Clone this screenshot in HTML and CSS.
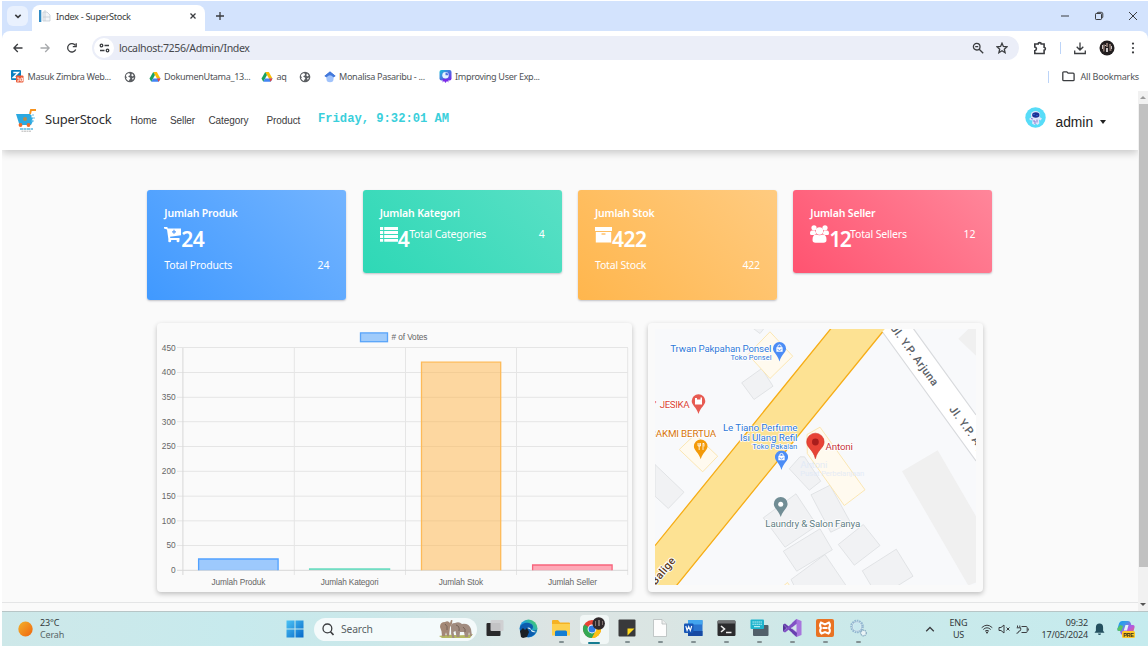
FILE: index.html
```html
<!DOCTYPE html>
<html lang="id">
<head>
<meta charset="utf-8">
<title>Index - SuperStock</title>
<link rel="stylesheet" href="styles.css">
</head>
<body>
<svg class="defs" aria-hidden="true">
  <defs>
    <linearGradient id="copilot" x1="0" y1="0" x2="1" y2="1"><stop offset="0" stop-color="#0f9bf0"/><stop offset=".3" stop-color="#3b9be8"/><stop offset=".6" stop-color="#b458e6"/><stop offset="1" stop-color="#f06a50"/></linearGradient>
    <linearGradient id="edge" x1="0" y1="1" x2="1" y2="0"><stop offset="0" stop-color="#0b62b8"/><stop offset=".5" stop-color="#1b9de2"/><stop offset="1" stop-color="#54d94c"/></linearGradient>
    <linearGradient id="sun" x1="0" y1="0" x2="1" y2="1"><stop offset="0" stop-color="#f3b32c"/><stop offset="1" stop-color="#f0640e"/></linearGradient>
    <linearGradient id="win" x1="0" y1="0" x2="1" y2="1"><stop offset="0" stop-color="#4cc3f5"/><stop offset="1" stop-color="#0668c9"/></linearGradient>
    <linearGradient id="exp" x1="0" y1="0" x2="1" y2="1"><stop offset="0" stop-color="#19c5d8"/><stop offset="1" stop-color="#7a22ea"/></linearGradient>
  </defs>
  <symbol id="globe" viewBox="0 0 12 12"><circle cx="6" cy="6" r="5.300" fill="#5b5e62"/><path d="M1.800 4.800C2.500 3 4 2 5.500 2 5 3 6.500 3.200 6 4.300 5.500 5 4.500 4.500 4.300 5.500 4.500 6.500 6.500 6 6.300 7.500 6 8.500 5 8.500 5 10 3.500 9.500 2 8 1.800 6.500L3.300 7.200ZM8 2.500 9.800 4.500 8.200 5.500 7.300 4.200ZM8 7.200 10.200 6.600 8.800 9Z" fill="#fff"/></symbol>
  <symbol id="drive" viewBox="0 0 12 12"><path d="M4.200 1h3.600l3.700 6.500H8Z" fill="#fbbc04"/><path d="M4.200 1 6 4.100 2.300 10.800.500 7.500Z" fill="#1aa15f"/><path d="M4 7.500h7.500l-1.800 3.300H2.300Z" fill="#4285f4"/><path d="m8 7.500h3.500l-1.800 3.300Z" fill="#ea4335"/></symbol>
  <symbol id="shop" viewBox="0 0 14 21"><path d="M7 0a6.700 6.700 0 0 1 6.700 6.700C13.700 11 9 12.500 7 20 5 12.500.300 11 .300 6.700A6.700 6.700 0 0 1 7 0Z" fill="#4c8df6"/><path d="M3.800 5.500h6.400v4.500H3.800Z" fill="#fff"/><path d="M5.300 6V4.700a1.700 1.700 0 0 1 3.400 0V6" fill="none" stroke="#fff"/><path d="M5.300 7a1.700 1.700 0 0 0 3.400 0" fill="none" stroke="#4c8df6" stroke-width=".8"/></symbol>
</svg>

<div class="screen">
  <header class="tabstrip">
    <span class="tab-search"><svg width="10" height="10" viewBox="0 0 10 10"><path d="M2.300 3.800 5 6.300l2.700-2.500" class="ln bold"/></svg></span>
    <div class="tab">
      <svg width="12" height="12" viewBox="0 0 12 12"><path d="M0 0h2.300v12H0Z" fill="#318bc4"/><path d="M4 2h4l3 3v6H4ZM6 0v11M4 7h7" fill="#f2f5f8" stroke="#c3ccd4" stroke-width=".8"/></svg>
      <span class="tab-title">Index - SuperStock</span>
      <svg class="tab-close" width="8" height="8" viewBox="0 0 8 8"><path d="M1.500 1.500l5 5m0-5-5 5" class="ln"/></svg>
    </div>
    <svg class="plus" width="10" height="10" viewBox="0 0 10 10"><path d="M5 1v8M1 5h8" class="ln"/></svg>
    <div class="win-buttons">
      <svg width="10" height="10" viewBox="0 0 10 10"><path d="M1 5h8" class="ln thin"/></svg>
      <svg width="10" height="10" viewBox="0 0 10 10"><path d="M1.500 3.200q0-.7.700-.7h4.600q.700 0 .700.700v4.600q0 .700-.7.700H2.200q-.7 0-.7-.7ZM3 2.300q.200-1 1-1h3.300q1.500 0 1.500 1.500V6q0 .800-.8 1" class="ln thin"/></svg>
      <svg width="10" height="10" viewBox="0 0 10 10"><path d="m1 1 8 8m0-8-8 8" class="ln thin"/></svg>
    </div>
  </header>

  <div class="toolbar">
    <div class="nav-icons">
      <svg width="12" height="12" viewBox="0 0 12 12"><path d="M10.500 6H2M5.800 2 1.900 6l3.900 4" class="ln"/></svg>
      <svg width="12" height="12" viewBox="0 0 12 12"><path d="M1.500 6H10M6.200 2l3.900 4-3.900 4" class="ln pale"/></svg>
      <svg width="12" height="12" viewBox="0 0 12 12"><path d="M9.700 7.500A4.200 4.200 0 1 1 9.300 3.400M10.200 1.300v3.400H6.800" class="ln"/></svg>
    </div>
    <div class="omnibox">
      <span class="site-info"><svg width="11" height="10" viewBox="0 0 11 10"><circle cx="2.500" cy="2.500" r="1.300" class="ln"/><path d="M5.500 2.500h4.500M1 7.500h4.500" class="ln"/><circle cx="8.500" cy="7.500" r="1.300" class="ln"/></svg></span>
      <span class="url">localhost:7256/Admin/Index</span>
      <svg class="lens" width="12" height="12" viewBox="0 0 12 12"><circle cx="4.700" cy="4.700" r="3.300" class="ln"/><path d="m7.200 7.200 4 4M3.200 4.700h3" class="ln"/></svg>
      <svg width="12" height="12" viewBox="0 0 12 12"><path d="m6 1.200 1.400 3.300 3.600.300-2.700 2.400.800 3.500L6 8.800l-3.100 1.900.800-3.500L1 4.800l3.600-.3Z" class="ln"/></svg>
    </div>
    <div class="tools">
      <svg width="14" height="14" viewBox="0 0 14 14"><path d="M1.800 3h3.400q0-1.400 1.500-1.400T8.200 3h2.900v3.300q1.300.200 1.300 1.500t-1.300 1.500v3.200H1.800V9.700q1.600-.3 1.600-1.900T1.800 6Z" class="ln bold"/></svg>
      <i class="sep"></i>
      <svg class="dl" width="14" height="14" viewBox="0 0 14 14"><path d="M7 1.500v7.300M3.700 5.700 7 9l3.300-3.300M1.700 9.500v3h10.600v-3" class="ln"/></svg>
      <svg class="me" width="16" height="16" viewBox="0 0 16 16"><circle cx="8" cy="8" r="7.500" fill="#211d1e"/><path d="M4 4.500h2l-.5 7H4ZM7 3h2v4H7ZM10 4h2l.500 7h-2Z" fill="#84716a"/><path d="M3 5h1v4H3ZM7 8h2v4H7ZM12 6h1v3h-1ZM6 5h1v1H6Z" fill="#c9c4c5"/></svg>
      <svg width="4" height="14" viewBox="0 0 4 14"><g fill="#3b3d40"><circle cx="2" cy="2.600" r="1.100"/><circle cx="2" cy="7" r="1.100"/><circle cx="2" cy="11.400" r="1.100"/></g></svg>
    </div>
  </div>

  <div class="bookmarks">
    <span class="bm"><svg width="13" height="13" viewBox="0 0 13 13"><rect width="10" height="10" rx="1" fill="#087fc0"/><path d="M2.300 2.500h5l-5 5h5" fill="none" stroke="#fff" stroke-width="1.500"/><rect x="5" y="5.500" width="7.500" height="7" rx="1" fill="#ec5b38"/><path d="M6 8h2v3H6M10 8h1.500v3H9.500Z" stroke="#fff" fill="none" stroke-width=".8"/></svg><span class="w84">Masuk Zimbra Web...</span></span>
    <span class="bm"><svg width="12" height="12"><use href="#globe"/></svg></span>
    <span class="bm"><svg width="12" height="12"><use href="#drive"/></svg><span class="w85">DokumenUtama_13...</span></span>
    <span class="bm"><svg width="12" height="12"><use href="#drive"/></svg><span class="w10">aq</span></span>
    <span class="bm"><svg width="12" height="12"><use href="#globe"/></svg></span>
    <span class="bm"><svg width="12" height="12" viewBox="0 0 12 12"><path d="M6 .500 11.500 5 6 7 .500 5Z" fill="#356ac3"/><circle cx="6" cy="7.700" r="3.600" fill="#a1c3fb"/><path d="M.500 5 6 .500 11.500 5 9.300 6.500a3.600 3.600 0 0 0-6.600 0Z" fill="#4379dd"/></svg><span class="w87">Monalisa Pasaribu - ...</span></span>
    <span class="bm"><svg width="13" height="13" viewBox="0 0 13 13"><rect x=".5" width="12" height="10.500" rx="2" fill="url(#exp)"/><path d="m4 9-.5 3.500L5 11l1.500 2L8 11l1.500 1.500L9 9Z" fill="#7a2ae8"/><circle cx="6.500" cy="5.200" r="3.200" fill="#e6f4ff"/><path d="M6.500 5.200V2.500a2.700 2.700 0 0 1 2.700 2.700Z" fill="#5372de"/></svg><span class="w85">Improving User Exp...</span></span>
    <span class="all-bm"><i class="sep"></i><svg width="13" height="11" viewBox="0 0 13 11"><path d="M.800 2q0-1.200 1-1.200h3l1.300 1.400h5q1 0 1 1v5.500q0 1-1 1H1.800q-1 0-1-1Z" class="ln"/></svg><span>All Bookmarks</span></span>
  </div>

  <div class="viewport">
    <div class="page">
      <nav class="navbar">
        <svg class="brand-logo" width="21" height="24" viewBox="0 0 21 24"><path d="M0 5h14l2 2-1 1 2 1-1 2 1 1-2 4H3.500Z" fill="#2ba9e1"/><path d="M14 5 15 1h5" fill="none" stroke="#f7931e" stroke-width="1.900"/><path d="M16 6h2M16 9h3M15 12h3" stroke="#62bfe9"/><circle cx="9" cy="10" r="2" fill="#b88c4c"/><circle cx="4.500" cy="16" r="1.900" fill="#f06a2a"/><circle cx="12.500" cy="16" r="1.900" fill="#f06a2a"/><path d="M4 20h13" stroke="#5abbe4" stroke-width="1.500" stroke-dasharray="3 .5"/><path d="M5.500 22.200h10" stroke="#a5a5a5" stroke-width=".8" stroke-dasharray="2 .5"/></svg>
        <span class="brand">SuperStock</span>
        <span class="link home">Home</span>
        <span class="link seller">Seller</span>
        <span class="link category">Category</span>
        <span class="link product">Product</span>
        <span class="clock">Friday, 9:32:01 AM</span>
        <div class="user">
          <svg width="21" height="21" viewBox="0 0 21 21"><circle cx="10.500" cy="10.500" r="10.200" fill="#57dcf8"/><path d="M4 12 6.500 10h8l2.500 1.500-1.500 2-1.500-1 .300 4-2 1.500-1.300-1.500-1.500 1.500-2.500-1.500.5-3.500-1.500.5Z" fill="#dfe5fb"/><ellipse cx="10.500" cy="8" rx="4.700" ry="3.900" fill="#e4e5fb"/><ellipse cx="10.800" cy="8" rx="3.700" ry="2.700" fill="#1b3096"/><path d="M8 14h2v3M12 12.500v3M6 11.500l2 .5" stroke="#8a78cf" fill="none"/><path d="M8.500 7.500h1M11.500 8.500h1" stroke="#3887e7"/></svg>
          <span class="user-name">admin</span>
          <i class="caret"></i>
        </div>
      </nav>

      <section class="cards">
        <article class="card blue tall">
          <h3>Jumlah Produk</h3>
          <div class="metric"><svg width="17" height="17" viewBox="0 0 17 17"><path d="M0 0h3.300l.5 1.500H17v6.700l-11 1.600.3 1.100H15.500V13H4.500L3 2.500 0 1.500Z" fill="#fff"/><circle cx="5.700" cy="13.800" r="1.500" fill="#fff"/><circle cx="14" cy="13.800" r="1.500" fill="#fff"/><path d="M10 2.800v4M8 4.800h4" stroke="#5a9ff9" stroke-width="1.200"/></svg><b>24</b></div>
          <p><span>Total Products</span><span>24</span></p>
        </article>
        <article class="card green">
          <h3>Jumlah Kategori</h3>
          <div class="metric inline"><svg width="18" height="15" viewBox="0 0 18 15"><path d="M0 0h3.200v3H0ZM4.200 0H18v3H4.200ZM0 4h3.200v3H0ZM4.200 4H18v3H4.200ZM0 8h3.200v3H0ZM4.200 8H18v3H4.200ZM0 12h3.200v2.800H0ZM4.200 12H18v2.800H4.200Z" fill="#fff"/></svg><b>4</b><p><span>Total Categories</span><span>4</span></p></div>
        </article>
        <article class="card orange tall">
          <h3>Jumlah Stok</h3>
          <div class="metric"><svg width="17" height="16" viewBox="0 0 17 16"><path d="M0 0h17v4H0ZM.800 5h15.400v10.500H.800Z" fill="#fff"/><path d="M7 7h3" stroke="#ffc16c" stroke-width="1.400" stroke-linecap="round"/></svg><b class="pad">422</b></div>
          <p><span>Total Stock</span><span>422</span></p>
        </article>
        <article class="card red">
          <h3>Jumlah Seller</h3>
          <div class="metric inline"><svg class="people" width="19" height="18" viewBox="0 0 19 18"><g fill="#fff"><circle cx="4" cy="2.800" r="2.600"/><circle cx="15" cy="2.800" r="2.600"/><path d="M0 8.500Q0 5.500 2 5.500h3l1.300 3-2 1.500H1.500Q0 10 0 8.500ZM19 8.500q0-3-2-3h-3l-1.300 3 2 1.500h2.800Q19 10 19 8.500Z"/><circle cx="9.500" cy="6" r="3.700"/><path d="M2.500 15q0-5.500 3.500-5.500 3.500 1.500 7 0 3.500 0 3.500 5.500 0 2.800-3 2.800H5.500q-3 0-3-2.800Z"/></g></svg><b class="tight">12</b><p><span>Total Sellers</span><span>12</span></p></div>
        </article>
      </section>

      <section class="panels">
        <div class="panel chart">
          <svg width="475" height="269" viewBox="157 323 475 269">
            <rect x="360.500" y="332.900" width="27" height="8.800" fill="#9fcbfb" stroke="#59a4f9" stroke-width="1.300"/>
            <text x="391.500" y="339.700" textLength="36" class="ct">#&#160;of Votes</text>
            <g class="grid">
              <path d="M177 347.500H628M177 372.500H628M177 397.300H628M177 421.700H628M177 446.500H628M177 471.300H628M177 496.200H628M177 520.800H628M177 545.500H628M294.300 348V575M405.500 348V575M516.500 348V575M627.700 348V575"/>
              <path d="M177 570.300H628M182.900 348V575" class="axis"/>
            </g>
            <g class="ct" text-anchor="end">
              <text x="175.700" y="350.600">450</text><text x="175.700" y="375.400">400</text><text x="175.700" y="400">350</text><text x="175.700" y="424.600">300</text><text x="175.700" y="449.400">250</text><text x="175.700" y="474.100">200</text><text x="175.700" y="498.800">150</text><text x="175.700" y="523.500">100</text><text x="175.700" y="548.200">50</text><text x="175.700" y="573.200">0</text>
            </g>
            <g stroke-width="1.300">
              <path d="M198.600 570.300V559h79.500v11.300" fill="#51a1ff" fill-opacity=".55" stroke="#51a1ff"/>
              <path d="M309.600 570V569h80v1" fill="#8ce3cd" stroke="#69dcc0"/>
              <path d="M421.500 570.300V362.200h79.200v208.100" fill="#ffb74d" fill-opacity=".52" stroke="#fdba59"/>
              <path d="M532.600 570.300V565h79.500v5.300" fill="#ff8da0" fill-opacity=".75" stroke="#f7647c"/>
            </g>
            <g class="ct">
              <text x="211.500" y="584.600" textLength="54">Jumlah Produk</text><text x="320.700" y="584.600" textLength="58">Jumlah Kategori</text><text x="438.700" y="584.600" textLength="44.500">Jumlah Stok</text><text x="548" y="584.600" textLength="49">Jumlah Seller</text>
            </g>
          </svg>
        </div>
        <div class="panel map">
          <svg width="321" height="256" viewBox="655 329.500 321 256">
            <rect x="655" y="329" width="321" height="257" fill="#f8f9fb"/>
            <path d="m902 471.700 35.700-21L976 516.700V583l-7.700 3Z M958.300 339.300 969 329h7v27.300Z" fill="#f0f0f0"/>
            <g fill="#f1f2f4" stroke="#dcdee1" stroke-width=".8">
              <path d="m753.300 329 6.700 5 4-5ZM741.700 383.300l20-14.300L773 386.700 754 400ZM655 465l29 27.700-15.700 16.300L655 496.700ZM789.300 469.300l10.700-12 4.500 0 16.200 24.400-11.400 9ZM763.300 518.300l32.700-24L817 526l-32 21.700ZM811 495.300l19-9.600 20.700 37.600-20 9.400ZM783.300 551.700l36.700-22.400 12.300 21-35.600 21.400ZM791 580l34-25 21 31h-52ZM838.300 545l25-20 16.700 21-25.700 19.700ZM862.300 571.300l34-21.600L913 576.700 898 586h-27Z"/>
            </g>
            <g fill="#fffaef" stroke="#fbe4ac" stroke-width=".9">
              <path d="m770 332.300 22.700 24.400L770 379l-22-24ZM679.300 450 695 435l22.700 21.700-15 15.600ZM807 435l13-7.300 45 62.600-20.700 15.700-37-52ZM784 586l3.500-3 2 3Z"/>
            </g>
            <path d="M882 329h31.500L976 415v46.500L882.500 333Z" fill="#fff"/>
            <path d="m913.300 329 62.700 86.500M882.500 332.500 976 461.500" stroke="#d8dadd" stroke-width="1.200"/>
            <path d="M830.700 329h54.500L677 586h-22V546Z" fill="#fde293"/>
            <path d="M831 329 655 546.200M882.500 332.500 676.500 586" stroke="#f6ad17" stroke-width="1.300"/>
            <g class="road">
              <text transform="translate(890.300 329) rotate(53.700)" textLength="72">Jl. Y.P. Arjuna</text>
              <text transform="translate(948.800 409.800) rotate(53.700)" textLength="72">Jl. Y.P. Arjuna</text>
              <text transform="translate(655.500 586) rotate(-50)" class="balige" textLength="32">Balige</text>
            </g>
            <g class="lbl">
              <g fill="#2e78d8"><text x="670.300" y="352.800" textLength="101">Trwan Pakpahan Ponsel</text><text x="730.500" y="360" textLength="41" class="sub">Toko Ponsel</text>
              <text x="723" y="431.800" textLength="74.500">Le Tiano Perfume</text><text x="740" y="441.500" textLength="57.500">Isi Ulang Refil</text><text x="752.300" y="449" textLength="45" class="sub">Toko Pakaian</text></g>
              <g fill="#db4537"><text x="654.700" y="408.800">'</text><text x="659.700" y="408.800" textLength="30">JESIKA</text></g>
              <text x="649.700" y="437.300" textLength="66.500" fill="#d6750b">BAKMI BERTUA</text>
              <text x="765.300" y="527.600" textLength="95" fill="#607d83">Laundry &amp; Salon Fanya</text>
              <text x="825.500" y="450" textLength="27.500" fill="#c5323a">Antoni</text>
              <g fill="#dfe9f8" class="ghost"><text x="800.300" y="468.300" textLength="27">Antoni</text><text x="800.300" y="476.300" textLength="64" class="sub">Pusat Perbelanjaan</text></g>
            </g>
            <use href="#shop" x="772.500" y="342.500" width="14" height="20.500"/>
            <use href="#shop" x="774.500" y="451" width="14" height="20.500"/>
            <path d="M698.500 394.700a6.800 6.800 0 0 1 6.800 6.800c0 4-4.500 6-6.800 13-2.300-7-6.800-9-6.800-13a6.800 6.800 0 0 1 6.800-6.800Z" fill="#e75b52"/><path d="M695 398.500h2v1.500h3.500v-2h1.500v7h-7Z" fill="#fff"/>
            <path d="M700.700 440a6.800 6.800 0 0 1 6.800 6.800c0 4-4.500 6-6.800 13-2.300-7-6.800-9-6.800-13a6.800 6.800 0 0 1 6.800-6.800Z" fill="#f39a09"/><path d="M698 443.500v3h2.500v-3M699.200 443.500v7M703 443.500v7M703 444h1v3" stroke="#fff" fill="none" stroke-width=".8"/>
            <path d="M780.700 497.600a6.900 6.900 0 0 1 6.900 6.900c0 4-4.500 6-6.900 13-2.300-7-6.900-9-6.900-13a6.900 6.900 0 0 1 6.900-6.900Z" fill="#718d95"/><circle cx="780.700" cy="504.700" r="2.500" fill="#fff"/>
            <path d="M815.400 433.700a8.700 8.700 0 0 1 8.700 8.700c0 6-6.700 7.800-8.700 16.800-2-9-8.700-10.800-8.700-16.800a8.700 8.700 0 0 1 8.700-8.700Z" fill="#e84336" stroke="#cf3429" stroke-width=".6"/><circle cx="815.400" cy="442.500" r="3.400" fill="#a91d1c"/>
          </svg>
        </div>
      </section>
      <footer class="rule"></footer>
    </div>
    <div class="scrollbar"><i class="up"></i><i class="thumb"></i><i class="down"></i></div>
  </div>

  <div class="taskbar">
    <svg class="sun" width="15" height="16" viewBox="0 0 15 16"><ellipse cx="7.500" cy="8" rx="7.200" ry="7.600" fill="url(#sun)"/></svg>
    <div class="weather"><span>23°C</span><span>Cerah</span></div>
    <svg class="start" width="18" height="18" viewBox="0 0 18 18"><path d="M.500.500h8v8h-8ZM9.500.500h8v8h-8ZM.500 9.500h8v8h-8ZM9.500 9.500h8v8h-8Z" fill="url(#win)"/></svg>
    <div class="search"><svg width="12" height="13" viewBox="0 0 12 13"><circle cx="5.400" cy="5.400" r="4.400" class="ln"/><path d="m8.500 8.700 3 3.300" class="ln bold"/></svg><span>Search</span>
      <svg class="elephants" width="34" height="20" viewBox="0 0 34 20"><path d="M0 17q8-2 16-1t18-1l-3 4H3Z" fill="#b5b862"/><path d="M1 8q0-5 5-5 3-2 5 1l1-3 1.500.3q0 4-2.500 7l-1 9H8l-1-4-1 4H3l-.5-5Z" fill="#a38876"/><path d="M12 9q-1-5 4-5 4-2 7 1 7-1 9 5l1 7h-2l-1-4-1 5h-3l-1-5-4 0-.5 5h-3l-1-6-2 1 1 6h-2q-2-4-1.500-10Z" fill="#a18c80"/><path d="M6 5q3 2 2 6M17 6q4 1 3 6M24 8q3 2 2 5" stroke="#756358" fill="none"/></svg>
    </div>
    <div class="apps">
      <span><svg width="18" height="18" viewBox="0 0 18 18"><rect x=".5" y="4" width="14" height="13" rx="1" fill="#29292b"/><rect x="4.500" y="1" width="13" height="11" rx="1" fill="#cfcfd1" opacity=".93"/></svg></span>
      <span><svg width="19" height="19" viewBox="0 0 19 19"><circle cx="9.500" cy="9.500" r="9" fill="url(#edge)"/><path d="M1 8q3-5 9-4 4 1 4 4 0 2-2 2.500 3 2 6 0Q16 18 9 18 1 17 1 8Z" fill="#0c5cae"/><path d="M8 9q2-1 3 0 2 1.500 1 3 2 2 5 1" fill="#d9f4f5"/><path d="m1 12 3-3 2 2 2-2 2 4-2 5-4 1-2-1Z" fill="#1b2025"/></svg></span>
      <span><svg width="18" height="18" viewBox="0 0 18 18"><path d="M0 2q0-1 1-1h5l2 2.500h9q1 0 1 1V16H0Z" fill="#f5b223"/><path d="M0 5h18v11.500H0Z" fill="#fdd04e"/><path d="M3 13q0-1.500 1.500-1.500h9Q15 11.500 15 13v4H3Z" fill="#137dd4"/></svg><i></i></span>
      <span class="active"><svg width="24" height="22" viewBox="0 0 24 22"><circle cx="10" cy="12" r="9" fill="#e94335"/><path d="M10 12 2.200 7.500A9 9 0 0 0 10 21l4-6.500Z" fill="#34a853"/><path d="M10 12h9A9 9 0 0 1 10 21l4-6.500Z" fill="#fbbc05"/><path d="M10 8h8.100A9 9 0 0 1 10 21l3.500-7Z" fill="#fbc116"/><circle cx="10" cy="12" r="4.400" fill="#fff"/><circle cx="10" cy="12" r="3.500" fill="#2d7be5"/><circle cx="16.700" cy="6.500" r="6.200" fill="#30292b"/><path d="M13 4h1v5h-1M16 3h2v6h-2M20 4h1v4h-1" fill="#7d706d"/></svg><i></i></span>
      <span><svg width="18" height="18" viewBox="0 0 18 18"><rect x=".5" y=".5" width="17" height="17" rx="1" fill="#39393b"/><path d="M9.500 9.500H16.500l-7 7Z" fill="#ffd91c"/></svg><i></i></span>
      <span><svg width="14" height="18" viewBox="0 0 14 18"><path d="M.500.500h8.500l4.500 4.500v12.500H.500Z" fill="#fdfdfd" stroke="#b6bdbd" stroke-width=".8"/><path d="M9 .500V5h4.500" fill="#eee" stroke="#b6bdbd" stroke-width=".8"/></svg><i></i></span>
      <span><svg width="19" height="18" viewBox="0 0 19 18"><rect x="4" y="1" width="14.500" height="16" rx="1" fill="#2a75cf"/><path d="M4 1h14.500v4.500H4Z" fill="#42a5ee"/><path d="M4 12h14.500v5H4Z" fill="#174aa3"/><rect y="4.500" width="9.500" height="9.500" rx="1" fill="#1756b6"/><path d="m1.800 7 1.300 4.500L4.700 7.500l1.600 4L7.700 7" stroke="#fff" fill="none" stroke-width="1.100"/></svg><i></i></span>
      <span><svg width="19" height="17" viewBox="0 0 19 17"><rect x=".5" y=".5" width="18" height="15.500" rx="1.200" fill="#2b2b2d"/><path d="M.500 3.500V1.700Q.500.500 1.700.500h15.600q1.200 0 1.200 1.200v1.800Z" fill="#707274"/><path d="m4 6 3.500 3L4 12M9 12.500h5.500" stroke="#eee" fill="none" stroke-width="1.600"/></svg><i></i></span>
      <span><svg width="19" height="18" viewBox="0 0 19 18"><rect x="3" y="6" width="15.500" height="11" rx="1" fill="#52606a"/><rect x=".5" y=".5" width="13.500" height="9.500" rx="1" fill="#1eb4cd"/><path d="M2.500 3h9.500M2.500 5.300h9.500" stroke="#d6f8fc" stroke-width="1.100" stroke-dasharray="1.300 .7"/><path d="M4 7.700h6" stroke="#d6f8fc"/></svg><i></i></span>
      <span><svg width="19" height="18" viewBox="0 0 19 18"><path d="m13.500 0 5 2v14l-5 2-4.500-4V4Z" fill="#a875dd"/><path d="M0 5.500 2 4.500l12 9.500-.5 4Z" fill="#6840af"/><path d="M0 12.500 13.500 0v5L2 13.500Z" fill="#8150c5"/><path d="M0 5.500v7L3.500 9Z" fill="#54309b"/><path d="m8.500 9 5-4v8Z" fill="#d3e7ea"/></svg><i></i></span>
      <span><svg width="18" height="18" viewBox="0 0 18 18"><rect width="18" height="18" rx="2" fill="#e97323"/><path d="M5 3.500Q3 6.500 5 9q-2 3 .500 5.500L9 13l3.500 1.500Q15 12 13 9q2-3 0-5.500L9 5.500ZM6.500 9h5" fill="none" stroke="#fff" stroke-width="2"/></svg><i></i></span>
      <span><svg width="19" height="18" viewBox="0 0 19 18"><circle cx="8" cy="7.500" r="5.800" fill="#dceef5" stroke="#92b6d0" stroke-width="2" stroke-dasharray="1.600 .8"/><circle cx="8" cy="7.500" r="4.700" fill="none" stroke="#a9c5d9"/><circle cx="8" cy="7.500" r="3.700" fill="#c9e8ee"/><circle cx="14.500" cy="14" r="2.800" fill="#eaf4f6" stroke="#82a6bd" stroke-width="1.200" stroke-dasharray="1.300 .7"/></svg><i></i></span>
    </div>
    <svg class="chev" width="10" height="7" viewBox="0 0 10 7"><path d="M1.200 5.200 5 1.500l3.800 3.700" class="ln"/></svg>
    <div class="lang"><span>ENG</span><span>US</span></div>
    <div class="status">
      <svg width="12" height="10" viewBox="0 0 12 10"><path d="M.700 3.700Q6-1.300 11.300 3.700M2.300 5.500q3.700-3.500 7.400 0M4 7.200q2-1.800 4 0" class="ln thin"/><circle cx="6" cy="8.500" r="1" fill="#333"/></svg>
      <svg width="13" height="10" viewBox="0 0 13 10"><path d="M1 3.500h2L6 1v8L3 6.500H1ZM8.500 3.500l3 3m0-3-3 3" class="ln thin"/></svg>
      <svg width="13" height="11" viewBox="0 0 13 11"><path d="M5.500 2.500h4.700q1 0 1 1v4q0 1-1 1H5.500M12.300 4.500v2" class="ln thin"/><path d="M1.500 3.500v-2M3.800 3.500v-2M.700 3.800h4v2q0 1.300-2 1.500 0 2-2.200 2" class="ln thin"/></svg>
    </div>
    <div class="datetime"><span>09:32</span><span>17/05/2024</span></div>
    <svg class="bell" width="11" height="13" viewBox="0 0 11 13"><path d="M5.500.500q3.600 0 3.600 4v3.300l1.400 2H.500l1.400-2V4.500q0-4 3.600-4ZM4 10.500h3q0 1.500-1.500 1.500T4 10.500Z" fill="#24505f"/></svg>
    <svg class="copilot" width="18" height="19" viewBox="0 0 18 19"><path d="M5 1h6q2 0 2.700 2l.6 2H16q2 0 1.500 2.500L16 13q-.5 2-2.500 2H6q-2 0-2.500-2L3 11H2Q0 11 .500 8.500L2 3.500Q2.700 1 5 1Z" fill="url(#copilot)"/><path d="M.500 8.500Q0 11 2 11h2.500L6 6 3 5Z" fill="#58c465"/><path d="M8.500 5h3L10 10.500H6.800Z" fill="#e6f5f6"/><rect x="5" y="11" width="13" height="7" rx="1.500" fill="#ffc72b"/><text x="6.200" y="16.600" textLength="10.500" class="pre">PRE</text></svg>
  </div>
</div>
</body>
</html>
```

FILE: styles.css
```css
* { box-sizing: border-box; }
body { margin: 0; background: #fff; overflow: hidden; font-family: "Noto Sans", "Open Sans", sans-serif; }
svg { display: block; flex: none; }
.defs { position: absolute; width: 0; height: 0; }
.screen { display: flex; flex-direction: column; width: 1146px; height: 645px; margin: 1px 0 0 2px; }
.ln { fill: none; stroke: #3b3d40; stroke-width: 1.3; }
.bold { stroke-width: 1.6; }
.thin { stroke-width: 1; }
.pale { stroke: #a7a9ac; }

/* browser frame */
.tabstrip { display: flex; align-items: center; height: 38px; margin-bottom: -8px; padding: 0 10px 8px 5px; background: #d3e3fd; }
.tab-search { display: flex; align-items: center; justify-content: center; width: 21px; height: 20px; border-radius: 6px; background: #e9f1fe; }
.tab { display: flex; align-items: center; align-self: flex-end; width: 173px; height: 26px; margin-left: 4px; padding: 0 8px 4px 7px; border-radius: 8px 8px 0 0; background: #fff; }
.tab-title { margin-left: 5px; font-size: 9.2px; letter-spacing: -.33px; color: #3c3e41; white-space: nowrap; }
.tab-close { margin-left: auto; }
.plus { margin-left: 10px; }
.win-buttons { display: flex; gap: 24px; margin-left: auto; }
.toolbar { display: flex; align-items: center; height: 35px; padding-bottom: 1px; border-radius: 8px 8px 0 0; background: #fff; }
.nav-icons { display: flex; gap: 15px; margin-left: 10px; }
.omnibox { display: flex; align-items: center; width: 927px; height: 24px; margin-left: 14px; padding: 0 11px 0 2px; border-radius: 12px; background: #ebeef8; }
.site-info { display: flex; align-items: center; justify-content: center; width: 20px; height: 20px; border-radius: 50%; background: #fff; }
.url { margin-left: 5px; font-size: 10.6px; letter-spacing: -.37px; color: #46484c; }
.lens { margin-left: auto; margin-right: 12px; }
.tools { display: flex; align-items: center; margin-left: 14px; }
.sep { width: 1px; height: 12px; background: #bcd4f8; }
.tools .sep { margin: 0 12px 0 13px; }
.me { margin: 0 16px 0 12px; }
.bookmarks { display: flex; align-items: center; gap: 12.5px; height: 25px; padding: 0 9px 4px 9px; font-size: 9.1px; letter-spacing: -.33px; color: #515458; }
.bm, .all-bm { display: flex; align-items: center; gap: 3.500px; white-space: nowrap; }
.w84 { width: 84px; } .w85 { width: 84.500px; } .w87 { width: 87px; } .w10 { width: 10px; }
.all-bm { margin-left: auto; letter-spacing: -.2px; }
.all-bm .sep { margin-right: 9px; }
.all-bm span { margin-left: 2px; }

/* page */
.viewport { display: flex; height: 520px; }
.page { display: flex; flex-direction: column; width: 1136px; background: #fafafa; }
.navbar { display: flex; align-items: center; flex: none; height: 59px; padding: 0 32.500px 0 14px; background: #fff; box-shadow: 0 3px 8px rgba(0,0,0,.2); clip-path: inset(0 0 -14px 0); font-family: "Liberation Sans", Arial, sans-serif; }
.brand { width: 67px; margin-left: 8px; padding-bottom: 3px; font-family: "Noto Sans", sans-serif; font-size: 13px; letter-spacing: -.24px; color: #2d2d2f; }
.link { font-size: 10px; letter-spacing: -.1px; color: #3b3b3d; white-space: nowrap; }
.home { width: 39.500px; margin-left: 18.500px; }
.seller { width: 38.500px; }
.category { width: 58px; }
.product { width: 51.500px; }
.clock { padding-bottom: 3px; font: bold 12.15px "Liberation Mono", "Courier New", monospace; color: #3acfdb; white-space: nowrap; }
.user { display: flex; align-items: center; margin-left: auto; }
.user > svg { margin-bottom: 6px; }
.user-name { width: 38px; margin: 4px 6px 0 10px; font-size: 13.8px; color: #222; }
.caret { margin-top: 3px; border: 3.500px solid transparent; border-top: 4px solid #222; border-bottom: 0; }

.cards { display: grid; grid-template-columns: repeat(4, 199px); justify-content: space-between; align-items: start; width: 845px; height: 110px; margin: 40px 0 0 145.300px; }
.card { height: 83px; padding: 15px 17px; border-radius: 3px; color: #fff; box-shadow: 0 1px 2px rgba(60,60,80,.3); }
.tall { height: 110px; }
.blue { background: linear-gradient(45deg, #4099ff, #73b4ff); }
.green { background: linear-gradient(45deg, #2ed8b6, #59e0c5); }
.orange { background: linear-gradient(45deg, #ffb64d, #ffcb80); }
.red { background: linear-gradient(45deg, #ff5370, #ff869a); }
.card h3 { height: 20px; margin: 0; font-size: 10.5px; font-weight: 600; line-height: 16px; letter-spacing: -.15px; }
.metric { display: flex; align-items: flex-start; height: 30px; }
.metric svg { margin-top: 2px; }
.metric .people { margin-top: 0; }
.metric b { font-size: 21px; font-weight: 600; line-height: 28px; letter-spacing: -.5px; }
.metric .tight { letter-spacing: -1.600px; }
.card p { display: flex; justify-content: space-between; flex: 1; margin: 0; font-size: 10.5px; line-height: 20px; letter-spacing: -.17px; }
.card .inline p { margin-top: -1px; }
.card p span { white-space: nowrap; }

.panels { display: flex; gap: 16px; margin: 23px 0 0 155px; }
.panel { height: 269px; border-radius: 4px; background: #fafafa; box-shadow: 0 2px 5px rgba(0,0,0,.24); }
.chart { width: 475px; }
.map { width: 335px; padding: 6px 7px; }
.map svg { overflow: hidden; }
.ct { font: 8.300px "Liberation Sans", Arial, sans-serif; fill: #666; }
.grid path { fill: none; stroke: #e5e5e5; stroke-width: 1; }
.grid .axis { stroke: #d7d7d7; }
.lbl { font: 9.900px Roboto, sans-serif; paint-order: stroke; stroke: #fff; stroke-width: 1.500px; stroke-linejoin: round; }
.lbl .sub { font-size: 7.600px; }
.ghost { stroke: none; opacity: .8; }
.road { font: 500 11px Roboto, sans-serif; fill: #5a6066; }
.balige { fill: #5e3b22; paint-order: stroke; stroke: #fff; stroke-width: 2px; }
.rule { margin-top: 10px; height: 9px; border-top: 1px solid #e4e5e6; }
.scrollbar { display: flex; flex-direction: column; align-items: center; width: 10px; height: 520px; background: #f1f1f1; }
.up, .down { border: 3px solid transparent; }
.up { margin-top: 5px; border-top: 0; border-bottom: 3px solid #9a9a9a; }
.thumb { width: 9px; height: 463px; margin-top: 5px; background: #c1c1c1; }
.down { margin-top: auto; margin-bottom: 5px; border-bottom: 0; border-top: 3px solid #555; }

/* taskbar */
.taskbar { display: flex; align-items: center; height: 35px; padding: 0 13px 0 16px; border-top: 1px solid #b7c5c6; background: linear-gradient(90deg, #cee8e9 0, #c7eaed 20%, #cbe8ea 32%, #dce4e3 48%, #dae5e3 58%, #cce9e9 70%, #c5ebee 100%); font-size: 9px; letter-spacing: -.15px; color: #33393b; }
.weather, .lang, .datetime { display: flex; flex-direction: column; line-height: 12px; white-space: nowrap; }
.weather { width: 40px; margin-left: 7px; }
.weather span + span { color: #586668; }
.start { margin-left: 206px; }
.search { display: flex; align-items: center; width: 163px; height: 23px; margin-left: 10px; padding: 0 5px 0 8px; border-radius: 12px; background: #f4fafb; font-size: 10.300px; color: #596265; }
.search span { margin-left: 7px; }
.elephants { margin-left: auto; margin-right: -1px; }
.apps { display: grid; grid-template-columns: repeat(12, 33px); align-items: center; height: 34px; margin-left: 1.500px; }
.apps span { display: grid; grid-template-rows: 26px 2px; place-items: center; height: 34px; padding-top: 3px; align-content: start; }
.apps i { width: 5px; height: 2px; border-radius: 1px; background: #839193; }
.apps .active { width: 29px; height: 29px; margin: auto; padding-top: 0; grid-template-rows: 27px 2px; border-radius: 4px; background: #f1f7f6; }
.apps .active i { width: 12px; background: #157c91; }
.chev { margin-left: 50.500px; }
.lang { width: 19px; margin-left: 14px; align-items: center; }
.status { display: flex; align-items: center; gap: 5px; margin-left: 13px; }
.datetime { width: 50px; margin-left: 9px; align-items: flex-end; }
.bell { margin-left: 6px; }
.copilot { margin-left: auto; }
.pre { font: bold 5.500px "Liberation Sans", sans-serif; fill: #352b16; }
```
